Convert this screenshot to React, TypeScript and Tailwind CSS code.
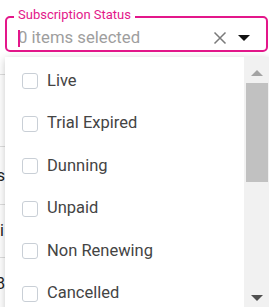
const options = ['Live', 'Trial Expired', 'Dunning', 'Unpaid', 'Non Renewing', 'Cancelled'];

const pink = 'border-[#e3178a]';

export default function App() {
    return (
        <div className="relative w-[269px] h-[307px] overflow-hidden bg-white font-['Roboto',sans-serif]">
            {/* Select field */}
            <div className="pt-[16px] pl-[5px] pr-[1px]">
                <div className={`relative h-[36px] border-2 ${pink} rounded-[5px] flex items-center pt-[7px] pl-[11px] pr-[16px]`}>
                    <span className="absolute -top-[10px] left-[7px] bg-white px-[4px] text-[13px] leading-[14px] text-[#e3178a]">
                        Subscription Status
                    </span>
                    <div className="relative flex-1 text-[16.7px] leading-[20px] text-[#9e9e9e]">
                        <span className="absolute left-0 top-[2px] w-[2px] h-[17px] bg-[#e3178a]" />
                        0 items selected
                    </div>
                    <svg width="14" height="14" viewBox="0 0 14 14" className="mr-[11px]">
                        <path d="M1.5 1.5 L12.5 12.5 M12.5 1.5 L1.5 12.5" stroke="#7a7a7a" strokeWidth="1.5" fill="none" />
                    </svg>
                    <svg width="12" height="6" viewBox="0 0 12 6">
                        <path d="M0 0 H12 L6 6 Z" fill="#111" />
                    </svg>
                </div>
            </div>

            {/* Table behind the menu */}
            <div className="text-[16px] text-[#222]">
                <div className="h-[23px] border-b border-[#dedede]" />
                <div className="h-[72px] border-b border-[#dedede]" />
                <div className="h-[58px] border-b border-[#dedede] flex items-center">
                    <div className="w-[5px] overflow-hidden flex justify-end whitespace-nowrap">Status</div>
                </div>
                <div className="h-[53px] border-b border-[#dedede] flex items-center">
                    <div className="w-[4px] overflow-hidden flex justify-end whitespace-nowrap">Multi</div>
                </div>
                <div className="h-[52px] flex items-center">
                    <div className="w-[5px] overflow-hidden flex justify-end whitespace-nowrap">2028</div>
                </div>
            </div>

            {/* Dropdown menu */}
            <div className="absolute left-[5px] top-[57px] w-[264px] h-[260px] bg-white shadow-[0_2px_8px_rgba(0,0,0,0.22)] flex">
                <ul className="flex-1 pt-[3px]">
                    {options.map((opt) => (
                        <li key={opt} className="h-[42.5px] flex items-center pl-[17px] gap-[9px]">
                            <span className="w-[16px] h-[16px] border border-[#c9cfd6] rounded-[3px] bg-white" />
                            <span className="text-[16.5px] text-[#444]">{opt}</span>
                        </li>
                    ))}
                </ul>
                <div className="w-[25px] bg-[#f1f1f1] flex flex-col items-center">
                    <svg width="12" height="6" viewBox="0 0 12 6" className="mt-[13px]">
                        <path d="M0 6 H12 L6 0 Z" fill="#a3a3a3" />
                    </svg>
                    <div className="mt-[7px] w-[22px] h-[99px] bg-[#c1c1c1]" />
                    <svg width="12" height="6" viewBox="0 0 12 6" className="mt-[113px]">
                        <path d="M0 0 H12 L6 6 Z" fill="#505050" />
                    </svg>
                </div>
            </div>
        </div>
    );
}
